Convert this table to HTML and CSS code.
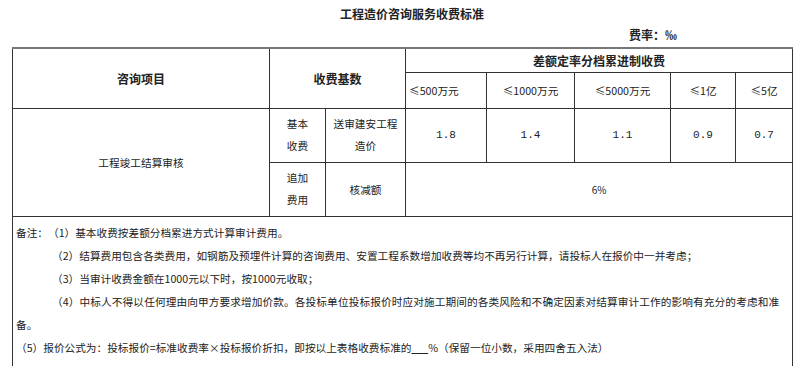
FILE: index.html
```html
<!DOCTYPE html>
<html lang="zh-CN">
<head>
<meta charset="utf-8">
<title>工程造价咨询服务收费标准</title>
<link rel="stylesheet" href="styles.css">
</head>
<body>
<div class="page">
  <h1 class="title">工程造价咨询服务收费标准</h1>
  <div class="rate">费率：‰</div>
  <table class="fee">
    <colgroup>
      <col class="c-item"><col class="c-kind"><col class="c-base">
      <col class="c-v1"><col class="c-v2"><col class="c-v3"><col class="c-v4"><col class="c-v5">
    </colgroup>
    <tr class="h1">
      <th rowspan="2">咨询项目</th>
      <th rowspan="2" colspan="2">收费基数</th>
      <th colspan="5">差额定率分档累进制收费</th>
    </tr>
    <tr class="h2">
      <td class="left">≤500万元</td>
      <td>≤1000万元</td>
      <td>≤5000万元</td>
      <td>≤1亿</td>
      <td>≤5亿</td>
    </tr>
    <tr class="r">
      <td rowspan="2">工程竣工结算审核</td>
      <td class="two">基本<br>收费</td>
      <td class="two">送审建安工程<br>造价</td>
      <td class="num">1.8</td>
      <td class="num">1.4</td>
      <td class="num">1.1</td>
      <td class="num">0.9</td>
      <td class="num">0.7</td>
    </tr>
    <tr class="r">
      <td class="two">追加<br>费用</td>
      <td>核减额</td>
      <td colspan="5" class="pct">6%</td>
    </tr>
    <tr class="notes">
      <td colspan="8">
        <p>备注：（1）基本收费按差额分档累进方式计算审计费用。</p>
        <p class="ind">（2）结算费用包含各类费用，如钢筋及预埋件计算的咨询费用、安置工程系数增加收费等均不再另行计算，请投标人在报价中一并考虑；</p>
        <p class="ind">（3）当审计收费金额在1000元以下时，按1000元收取；</p>
        <p class="ind">（4）中标人不得以任何理由向甲方要求增加价款。各投标单位投标报价时应对施工期间的各类风险和不确定因素对结算审计工作的影响有充分的考虑和准备。</p>
        <p>（5）报价公式为：投标报价=标准收费率×投标报价折扣，即按以上表格收费标准的<span class="blank">&nbsp;&nbsp;&nbsp;&nbsp;&nbsp;&nbsp;&nbsp;</span>%（保留一位小数，采用四舍五入法）</p>
      </td>
    </tr>
  </table>
</div>
</body>
</html>
```

FILE: styles.css
```css
html, body {
  margin: 0;
  padding: 0;
  background: #fff;
}

body {
  font-family: "Noto Sans CJK SC", "Noto Sans", sans-serif;
  font-size: 10.67px;
  color: #222;
  text-spacing-trim: space-all;
}

.page {
  width: 780px;
  padding-left: 12px;
}

.title {
  margin: 0;
  height: 28px;
  line-height: 28px;
  font-size: 12px;
  font-weight: bold;
  text-align: center;
  padding-left: 20px;
}

.rate {
  height: 19px;
  line-height: 14px;
  font-size: 12px;
  font-weight: bold;
  text-align: right;
  padding-right: 115px;
}

.fee {
  width: 780px;
  table-layout: fixed;
  border-collapse: collapse;
  border-top: 2px solid #777;
  border-left: 1px solid #444;
  border-right: 1px solid #444;
  border-bottom: 1px solid #444;
}

.c-item { width: 257px; }
.c-kind { width: 56px; }
.c-base { width: 80px; }
.c-v1 { width: 81px; }
.c-v2 { width: 88px; }
.c-v3 { width: 96px; }
.c-v4 { width: 65px; }
.c-v5 { width: 57px; }

.fee th,
.fee td {
  border: 1px solid #333;
  padding: 0 2px;
  text-align: center;
  vertical-align: middle;
  font-weight: normal;
}

.fee th {
  font-size: 12px;
  font-weight: bold;
}

.h1 { height: 24px; }
.h2 { height: 36px; }
.r { height: 54px; }

.fee td.left {
  text-align: left;
  padding-left: 3px;
}

.two {
  line-height: 22px;
}

.num {
  font-family: "Liberation Mono", monospace;
  font-size: 11px;
}

.pct {
  font-size: 10px;
}

.fee .notes td {
  height: 147px;
  text-align: justify;
  vertical-align: top;
  padding: 4px 13px 0 3px;
  line-height: 23px;
}

.notes p {
  margin: 0;
}

.notes p.ind {
  text-indent: 36px;
}

.blank {
  text-decoration: underline;
}
```
